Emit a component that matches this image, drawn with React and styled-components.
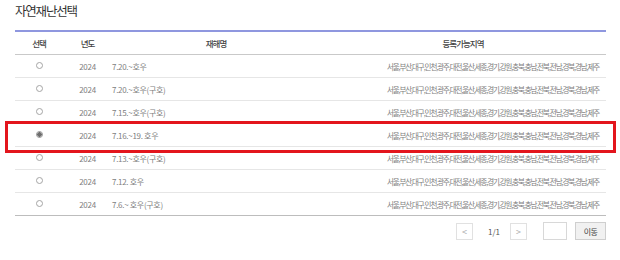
import React, { useState } from 'react';
import styled, { createGlobalStyle } from 'styled-components';

const REGIONS = '서울,부산,대구,인천,광주,대전,울산,세종,경기,강원,충북,충남,전북,전남,경북,경남,제주';

const rows = [
  { year: '2024', name: '7.20.~호우' },
  { year: '2024', name: '7.20.~호우(구호)' },
  { year: '2024', name: '7.15.~호우(구호)' },
  { year: '2024', name: '7.16.~19. 호우' },
  { year: '2024', name: '7.13.~호우(구호)' },
  { year: '2024', name: '7.12. 호우' },
  { year: '2024', name: '7.6.~ 호우(구호)' },
];

const GlobalStyle = createGlobalStyle`
  html, body { margin: 0; padding: 0; background: #fff; }
  body { font-family: "Noto Sans CJK KR", "Noto Sans", sans-serif; }
`;

const App = () => {
  // 선택된 행
  const [selected, setSelected] = useState(3);

  return (
    <Page>
      <GlobalStyle />
      <Title>자연재난선택</Title>

      <TableWrap>
        <Table>
          <colgroup>
            <col style={{ width: 48 }} />
            <col style={{ width: 49 }} />
            <col style={{ width: 208 }} />
            <col />
          </colgroup>
          <thead>
            <tr>
              <Th>선택</Th>
              <Th>년도</Th>
              <Th>재해명</Th>
              <Th>등록가능지역</Th>
            </tr>
          </thead>
          <tbody>
            {rows.map((row, i) => (
              <Tr key={i} onClick={() => setSelected(i)}>
                <Td $align="center"><Radio $checked={selected === i} /></Td>
                <Td $align="center">{row.year}</Td>
                <Td>{row.name}</Td>
                <RegionTd>{REGIONS}</RegionTd>
              </Tr>
            ))}
          </tbody>
        </Table>
        <Highlight />
      </TableWrap>

      <Paging>
        <PageBtn>&lt;</PageBtn>
        <PageNum>1/1</PageNum>
        <PageBtn>&gt;</PageBtn>
        <PageInput type="text" />
        <GoBtn>이동</GoBtn>
      </Paging>
    </Page>
  );
};

export default App;

const Page = styled.div`
  width: 591px;
  padding: 0 14px 0 15px;
`;

const Title = styled.h2`
  margin: 0;
  padding-top: 3px;
  height: 27px;
  font-size: 12.5px;
  font-weight: 400;
  letter-spacing: -1.2px;
  line-height: 16px;
  color: #333;
`;

const TableWrap = styled.div`
  position: relative;
`;

const Table = styled.table`
  width: 100%;
  border-collapse: collapse;
  table-layout: fixed;
  border-top: 2px solid #8f97df;
`;

const Th = styled.th`
  height: 22px;
  padding: 0;
  font-size: 8.5px;
  font-weight: 500;
  letter-spacing: -1px;
  color: #444;
  text-align: center;
  border-bottom: 1px solid #c9c9c9;
`;

const Tr = styled.tr`
  cursor: pointer;

  td { border-bottom: 1px solid #e6e6e6; }
  &:last-child td { border-bottom-color: #bdbdbd; }
`;

const Td = styled.td`
  height: 22px;
  padding: 0;
  font-size: 8px;
  color: #808080;
  white-space: nowrap;
  text-align: ${({ $align }) => $align || 'left'};
  letter-spacing: -0.3px;
`;

const RegionTd = styled(Td)`
  text-align: right;
  padding-right: 7px;
  font-size: 7.5px;
  letter-spacing: -1.12px;
`;

const Radio = styled.span`
  display: inline-block;
  width: 5px;
  height: 5px;
  border-radius: 50%;
  border: 1px solid #a5a5a5;
  background: ${({ $checked }) => ($checked ? 'radial-gradient(circle, #6d6d6d 0 2px, #cfcfcf 2.5px)' : '#fff')};
  vertical-align: middle;
  position: relative;
  top: -2px;
`;

const Highlight = styled.div`
  position: absolute;
  left: -10px;
  right: -10px;
  top: 91px;
  height: 26px;
  border: 3px solid #e3151d;
  pointer-events: none;
`;

const Paging = styled.div`
  display: flex;
  justify-content: flex-end;
  align-items: center;
  margin-top: 6px;
  height: 18px;
`;

const PageBtn = styled.span`
  display: flex;
  align-items: center;
  justify-content: center;
  width: 15px;
  height: 15px;
  border: 1px solid #e1e1e1;
  font-size: 9px;
  color: #aaa;
`;

const PageNum = styled.span`
  margin: 0 10px 0 15px;
  font-size: 8px;
  color: #555;
`;

const PageInput = styled.input`
  box-sizing: border-box;
  width: 24px;
  height: 18px;
  margin: 0 8px 0 16px;
  padding: 0;
  border: 1px solid #d8d8d8;
  outline: none;
`;

const GoBtn = styled.button`
  box-sizing: border-box;
  width: 31px;
  height: 18px;
  padding: 0;
  border: 1px solid #cfcfcf;
  background: #f1f1f1;
  font-family: inherit;
  font-size: 8px;
  letter-spacing: -0.5px;
  color: #444;
`;
